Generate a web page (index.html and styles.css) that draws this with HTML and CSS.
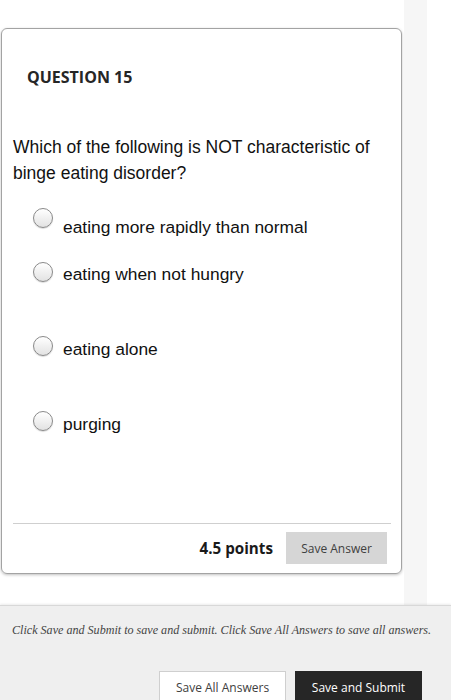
FILE: index.html
```html
<!DOCTYPE html>
<html>
<head>
<meta charset="utf-8">
<link rel="stylesheet" href="styles.css">
</head>
<body>
<div class="page">
  <div class="main">
    <div class="card">
      <h2 class="qtitle">QUESTION 15</h2>
      <p class="qtext">Which of the following is NOT characteristic of binge eating disorder?</p>
      <ul class="options">
        <li class="opt o1"><span class="radio"></span><span class="label">eating more rapidly than normal</span></li>
        <li class="opt o2"><span class="radio"></span><span class="label">eating when not hungry</span></li>
        <li class="opt o3"><span class="radio"></span><span class="label">eating alone</span></li>
        <li class="opt o4"><span class="radio"></span><span class="label">purging</span></li>
      </ul>
      <div class="footer">
        <span class="points">4.5 points</span>
        <button class="save">Save Answer</button>
      </div>
    </div>
  </div>
  <div class="strip"></div>
  <div class="rest"></div>
</div>
<div class="bottom">
  <p class="hint">Click Save and Submit to save and submit. Click Save All Answers to save all answers.</p>
  <div class="actions">
    <button class="btn all">Save All Answers</button>
    <button class="btn submit">Save and Submit</button>
  </div>
</div>
</body>
</html>
```

FILE: styles.css
```css
html, body { margin: 0; padding: 0; background: #fff; }
body { width: 451px; height: 700px; overflow: hidden; font-family: "Open Sans", sans-serif; }
.page { display: flex; height: 605px; }
.main { width: 404px; background: #fff; }
.strip { width: 23px; background: #f6f6f6; }
.rest { flex: 1; background: #fff; }
.card {
  margin: 28px 0 0 1px;
  width: 399px;
  height: 544px;
  border: 1px solid #a3a3a3;
  border-radius: 6px;
  box-shadow: 0 1px 3px rgba(0,0,0,0.25);
  display: flex;
  flex-direction: column;
  box-sizing: content-box;
}
.qtitle {
  margin: 37px 0 0 25px;
  font-family: "Open Sans", sans-serif;
  font-weight: 700;
  font-size: 16px;
  line-height: 22px;
  color: #262626;
}
.qtext {
  margin: 46px 12px 0 11px;
  font-family: "Liberation Sans", Arial, sans-serif;
  font-size: 17.5px;
  line-height: 26px;
  color: #111;
}
.options { list-style: none; margin: 0; padding: 0; }
.opt { display: flex; align-items: flex-start; padding-left: 31px; }
.o1 { margin-top: 22px; }
.o2 { margin-top: 25px; }
.o3 { margin-top: 52px; }
.o4 { margin-top: 52px; }
.radio {
  width: 20px; height: 20px; box-sizing: border-box;
  border: 1px solid #8a8a8a;
  border-radius: 50%;
  background: linear-gradient(#ffffff, #e2e2e2);
  box-shadow: 0 1px 1px rgba(0,0,0,0.15);
  flex: none;
}
.label {
  margin-left: 10px;
  font-family: "Liberation Sans", Arial, sans-serif;
  font-size: 17.4px;
  line-height: 20px;
  color: #111;
}
.o1 .label { margin-top: 9px; }
.o2 .label { margin-top: 2px; }
.o3 .label, .o4 .label { margin-top: 3px; }
.footer {
  margin: auto 10px 0 11px;
  border-top: 1px solid #cfcfcf;
  padding: 8px 4px 9px 0;
  display: flex;
  justify-content: flex-end;
  align-items: center;
}
.points {
  font-weight: 700;
  font-size: 15.2px;
  line-height: 20px;
  color: #1a1a1a;
  margin-right: 13px;
  margin-bottom: 1px;
}
.save {
  width: 101px; height: 32px;
  border: none;
  background: #d6d6d6;
  font-family: "Open Sans", sans-serif;
  font-size: 12px;
  color: #404040;
  padding: 0;
}
.bottom {
  height: 95px;
  background: #efefef;
  border-top: 1px solid #d8d8d8;
  box-shadow: 0 -1px 2px rgba(0,0,0,0.08);
  position: relative;
}
.hint {
  margin: 0;
  padding: 15px 0 0 12px;
  font-family: "Liberation Serif", Georgia, serif;
  font-style: italic;
  font-size: 12.1px;
  line-height: 18px;
  color: #444;
  white-space: nowrap;
}
.actions {
  display: flex;
  justify-content: flex-end;
  gap: 9px;
  padding: 32px 29px 0 0;
}
.btn {
  width: 127px; height: 32px;
  font-family: "Open Sans", sans-serif;
  font-size: 12px;
  padding: 0;
}
.all { background: #fff; border: 1px solid #cfcfcf; color: #404040; }
.submit { background: #262626; border: 1px solid #262626; color: #fff; }
```
